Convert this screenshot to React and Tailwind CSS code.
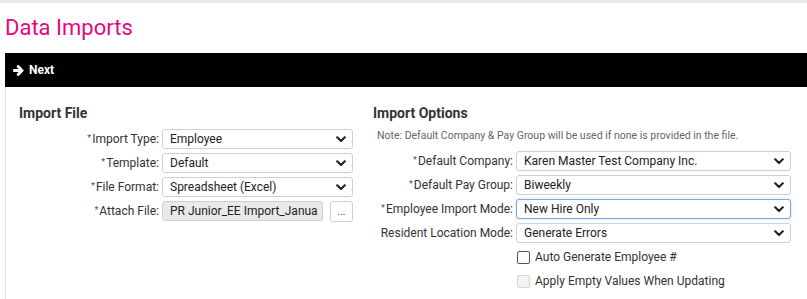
import React from "react";

const Chevron = () => (
  <svg width="10" height="7" viewBox="0 0 10 7" className="shrink-0">
    <path d="M1.2 1.3 L5 5 L8.8 1.3" fill="none" stroke="#222" strokeWidth="2.2" strokeLinecap="round" strokeLinejoin="round" />
  </svg>
);

const Select = ({ value, width, focused }) => (
  <div
    className={`h-[20px] flex items-center justify-between pl-[7px] pr-[6px] rounded-[3px] bg-white border ${
      focused ? "border-[#7fa8dc] shadow-[0_0_2px_rgba(102,175,233,0.6)]" : "border-[#cfcfcf]"
    }`}
    style={{ width }}
  >
    <span className="text-[12px] text-[#222] leading-none">{value}</span>
    <Chevron />
  </div>
);

const Label = ({ text, required }) => (
  <div className="w-[140px] shrink-0 text-right text-[12px] text-[#333] leading-none whitespace-nowrap">
    {required && <span className="text-[9px] text-[#555] relative top-[-2px] mr-[1px]">*</span>}
    {text}
  </div>
);

const Row = ({ label, required, children }) => (
  <div className="flex items-center gap-[3px] h-[20px]">
    <Label text={label} required={required} />
    {children}
  </div>
);

const Check = ({ label, disabled }) => (
  <div className="flex items-center h-[20px] pl-[144px] gap-[5px]">
    <div
      className={`w-[13px] h-[13px] rounded-[2px] border ${
        disabled ? "bg-[#f2f2f2] border-[#d6d6d6]" : "bg-white border-[#555]"
      }`}
    />
    <span className="text-[12px] text-[#333] leading-none">{label}</span>
  </div>
);

export default function App() {
  return (
    <div className="w-[807px] h-[299px] bg-white overflow-hidden" style={{ fontFamily: "Roboto, 'Liberation Sans', sans-serif" }}>
      <div className="h-[3px] bg-[#e9eaec]" />

      <h1 className="pl-[5px] mt-[12px] text-[22px] leading-[26px] text-[#e4087f]">Data Imports</h1>

      <div className="ml-[5px] mt-[12px]">
        {/* Toolbar */}
        <div className="h-[34px] bg-black flex items-center pl-[8px] gap-[5px]">
          <svg width="11" height="11" viewBox="0 0 11 11">
            <path d="M1.3 5.5 H8 M5.2 1.6 L9.1 5.5 L5.2 9.4" fill="none" stroke="#fff" strokeWidth="2.8" strokeLinecap="round" strokeLinejoin="round" />
          </svg>
          <span className="text-white text-[12px] font-bold">Next</span>
        </div>

        {/* Panel */}
        <div className="border-l border-[#e2e2e2] pl-[13px] pt-[18px] h-[212px] flex">
          {/* Import File */}
          <div className="w-[334px] shrink-0">
            <h2 className="text-[14px] leading-[16px] font-bold text-[#333]">Import File</h2>
            <div className="mt-[8px] flex flex-col gap-[4px]">
              <Row label="Import Type:" required>
                <Select value="Employee" width={191} />
              </Row>
              <Row label="Template:" required>
                <Select value="Default" width={191} />
              </Row>
              <Row label="File Format:" required>
                <Select value="Spreadsheet (Excel)" width={191} />
              </Row>
              <Row label="Attach File:" required>
                <div className="w-[161px] h-[20px] flex items-center pl-[7px] rounded-[3px] bg-[#e9e9e9] border border-[#cfcfcf] overflow-hidden whitespace-nowrap">
                  <span className="text-[12px] text-[#222] leading-none">PR Junior_EE Import_Janua</span>
                </div>
                <div className="ml-[4px] w-[23px] h-[21px] rounded-[3px] bg-white border border-[#cfcfcf] flex items-center justify-center">
                  <span className="text-[10px] text-[#444] leading-none relative top-[1px]">...</span>
                </div>
              </Row>
            </div>
          </div>

          {/* Import Options */}
          <div className="ml-[20px] flex-1">
            <h2 className="text-[14px] leading-[16px] font-bold text-[#333]">Import Options</h2>
            <p className="mt-[8px] pl-[4px] text-[10.5px] leading-[14px] text-[#666]">
              Note: Default Company &amp; Pay Group will be used if none is provided in the file.
            </p>
            <div className="mt-[8px] flex flex-col gap-[4px]">
              <Row label="Default Company:" required>
                <Select value="Karen Master Test Company Inc." width={275} />
              </Row>
              <Row label="Default Pay Group:" required>
                <Select value="Biweekly" width={275} />
              </Row>
              <Row label="Employee Import Mode:" required>
                <Select value="New Hire Only" width={275} focused />
              </Row>
              <Row label="Resident Location Mode:">
                <Select value="Generate Errors" width={275} />
              </Row>
              <Check label="Auto Generate Employee #" />
              <Check label="Apply Empty Values When Updating" disabled />
            </div>
          </div>
        </div>
      </div>
    </div>
  );
}
